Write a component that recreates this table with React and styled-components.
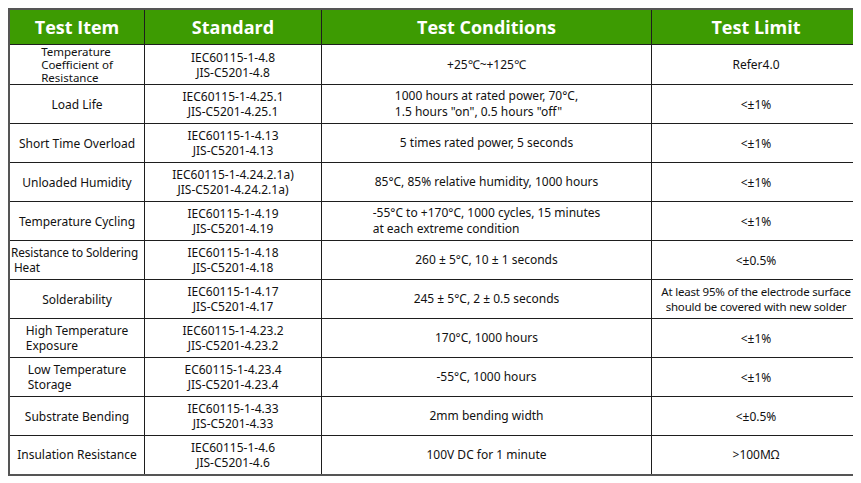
import React from 'react'
import styled, { createGlobalStyle } from 'styled-components'

const GlobalStyle = createGlobalStyle`
  body {
    margin: 8px;
    background: #ffffff;
    font-family: "Noto Sans", "Open Sans", sans-serif;
    color: #111111;
  }
`

const Table = styled.table`
  border-collapse: collapse;
  table-layout: fixed;
  width: 847px;
  border: 2px solid #555555;
`

const HeadCell = styled.th`
  width: ${({ $w }) => $w}px;
  height: 34px;
  padding: 0;
  background: #3d9b02;
  color: #ffffff;
  font-family: "Open Sans", "Noto Sans", sans-serif;
  font-size: 18px;
  font-weight: 700;
  line-height: 20px;
  text-align: center;
  vertical-align: middle;
  border: 1px solid #1e1e1e;
`

const Row = styled.tr`
  height: 39px;
`

const Cell = styled.td`
  padding: 0 0 0 ${({ $left }) => ($left ? 1 : 0)}px;
  text-align: ${({ $left }) => ($left ? 'left' : 'center')};
  vertical-align: middle;
  border: 1px solid #1e1e1e;
  font-size: ${({ $fs }) => $fs || 12}px;
  line-height: ${({ $lh }) => $lh || 15}px;
  overflow: hidden;
`

const Text = styled.span`
  display: inline-block;
  text-align: ${({ $center }) => ($center ? 'center' : 'left')};
  white-space: nowrap;
  letter-spacing: ${({ $ls }) => $ls || 0}px;
`

const rows = [
  {
    item: ['Temperature', 'Coefficient of', 'Resistance'],
    itemLh: 13,
    itemFs: 11.5,
    std: ['IEC60115-1-4.8', 'JIS-C5201-4.8'],
    cond: ['+25℃~+125℃'],
    limit: ['Refer4.0'],
  },
  {
    item: ['Load Life'],
    std: ['IEC60115-1-4.25.1', 'JIS-C5201-4.25.1'],
    cond: ['1000 hours at rated power, 70°C,', '1.5 hours "on", 0.5 hours "off"'],
    limit: ['<±1%'],
  },
  {
    item: ['Short Time Overload'],
    std: ['IEC60115-1-4.13', 'JIS-C5201-4.13'],
    cond: ['5 times rated power, 5 seconds'],
    limit: ['<±1%'],
  },
  {
    item: ['Unloaded Humidity'],
    std: ['IEC60115-1-4.24.2.1a)', 'JIS-C5201-4.24.2.1a)'],
    cond: ['85°C, 85% relative humidity, 1000 hours'],
    limit: ['<±1%'],
  },
  {
    item: ['Temperature Cycling'],
    std: ['IEC60115-1-4.19', 'JIS-C5201-4.19'],
    cond: ['-55°C to +170°C, 1000 cycles, 15 minutes', 'at each extreme condition'],
    limit: ['<±1%'],
  },
  {
    item: ['Resistance to Soldering', '\u00a0Heat'],
    itemFs: 11.8,
    itemLs: -0.1,
    itemLeft: true,
    std: ['IEC60115-1-4.18', 'JIS-C5201-4.18'],
    cond: ['260 ± 5°C, 10 ± 1 seconds'],
    limit: ['<±0.5%'],
  },
  {
    item: ['Solderability'],
    std: ['IEC60115-1-4.17', 'JIS-C5201-4.17'],
    cond: ['245 ± 5°C, 2 ± 0.5 seconds'],
    limit: ['At least 95% of the electrode surface', 'should be covered with new solder'],
    limitFs: 11.5,
    limitLs: -0.2,
  },
  {
    item: ['High Temperature', 'Exposure'],
    std: ['IEC60115-1-4.23.2', 'JIS-C5201-4.23.2'],
    cond: ['170°C, 1000 hours'],
    limit: ['<±1%'],
  },
  {
    item: ['Low Temperature', 'Storage'],
    std: ['EC60115-1-4.23.4', 'JIS-C5201-4.23.4'],
    cond: ['-55°C, 1000 hours'],
    limit: ['<±1%'],
  },
  {
    item: ['Substrate Bending'],
    std: ['IEC60115-1-4.33', 'JIS-C5201-4.33'],
    cond: ['2mm bending width'],
    limit: ['<±0.5%'],
  },
  {
    item: ['Insulation Resistance'],
    std: ['IEC60115-1-4.6', 'JIS-C5201-4.6'],
    cond: ['100V DC for 1 minute'],
    limit: ['>100MΩ'],
  },
]

const Lines = ({ lines, center, ls }) => (
  <Text $center={center} $ls={ls}>
    {lines.map((l, i) => (
      <React.Fragment key={i}>
        {i > 0 && <br />}
        {l}
      </React.Fragment>
    ))}
  </Text>
)

export default function App() {
  return (
    <>
      <GlobalStyle />
      <Table>
        <thead>
          <tr>
            <HeadCell $w={134}>Test Item</HeadCell>
            <HeadCell $w={176}>Standard</HeadCell>
            <HeadCell $w={329}>Test Conditions</HeadCell>
            <HeadCell $w={208}>Test Limit</HeadCell>
          </tr>
        </thead>
        <tbody>
          {rows.map((r, i) => (
            <Row key={i}>
              <Cell $lh={r.itemLh} $fs={r.itemFs} $left={r.itemLeft}>
                <Lines lines={r.item} ls={r.itemLs} />
              </Cell>
              <Cell>
                <Lines lines={r.std} center />
              </Cell>
              <Cell $lh={16}>
                <Lines lines={r.cond} />
              </Cell>
              <Cell $fs={r.limitFs}>
                <Lines lines={r.limit} center ls={r.limitLs} />
              </Cell>
            </Row>
          ))}
        </tbody>
      </Table>
    </>
  )
}
